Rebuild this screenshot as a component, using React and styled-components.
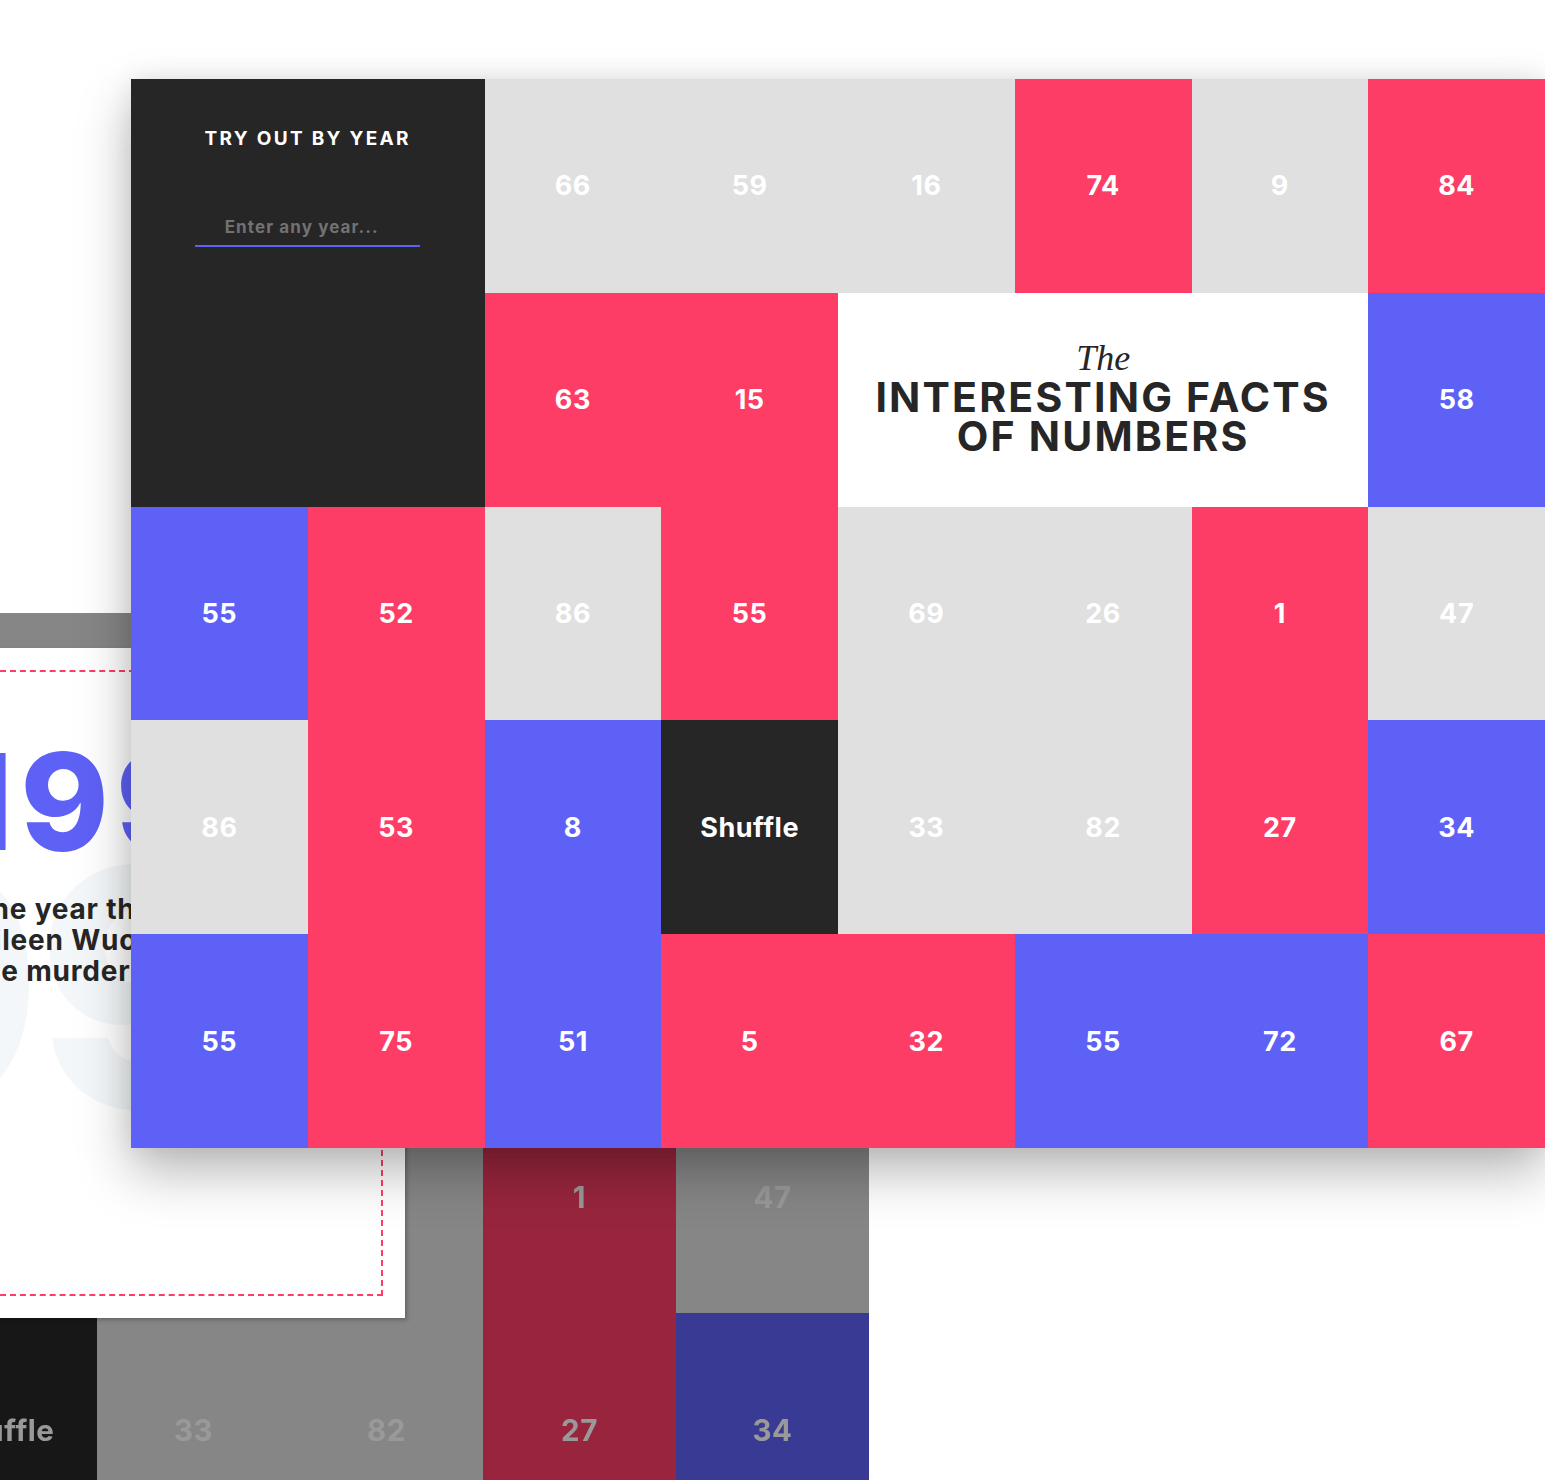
import React from "react";
import styled, { createGlobalStyle } from "styled-components";

const GlobalStyle = createGlobalStyle`
  html, body {
    margin: 0;
    padding: 0;
    background: #ffffff;
  }
  body {
    font-family: "Inter", "Liberation Sans", sans-serif;
  }
`;

const COLORS = {
  red: "#fd3d65",
  blue: "#5e61f6",
  gray: "#e0e0e0",
  dark: "#262626",
};

// [label, tone] per grid slot; the big panel and title take their own slots
const CELLS = [
  ["66", "gray"], ["59", "gray"], ["16", "gray"], ["74", "red"], ["9", "gray"], ["84", "red"],
  ["63", "red"], ["15", "red"], ["58", "blue"],
  ["55", "blue"], ["52", "red"], ["86", "gray"], ["55", "red"], ["69", "gray"], ["26", "gray"], ["1", "red"], ["47", "gray"],
  ["86", "gray"], ["53", "red"], ["8", "blue"], ["Shuffle", "dark"], ["33", "gray"], ["82", "gray"], ["27", "red"], ["34", "blue"],
  ["55", "blue"], ["75", "red"], ["51", "blue"], ["5", "red"], ["32", "red"], ["55", "blue"], ["72", "blue"], ["67", "red"],
];

const Board = ({ scale = 1 }) => {
  const cells = CELLS.map(([label, tone], i) => (
    <Cell key={i} tone={tone}>
      {label}
    </Cell>
  ));
  return (
    <Grid colW={176.75 * scale} rowH={213.8 * scale} size={27 * scale}>
      <YearPanel>
        <PanelTitle>TRY OUT BY YEAR</PanelTitle>
        <YearInput placeholder="Enter any year..." />
      </YearPanel>
      {cells.slice(0, 6)}
      {cells.slice(6, 8)}
      <TitleCell>
        <Script>The</Script>
        <Heading>
          INTERESTING FACTS
          <br />
          OF NUMBERS
        </Heading>
      </TitleCell>
      {cells.slice(8)}
    </Grid>
  );
};

const App = () => {
  return (
    <>
      <GlobalStyle />
      <Page>
        <Backdrop>
          <Board scale={1.092} />
        </Backdrop>
        <FactCard>
          <Dashed>
            <Watermark>992</Watermark>
            <Year>1992</Year>
            <Fact>
              The year that
              <br />
              Aileen Wuornos
              <br />
              the murders of
            </Fact>
          </Dashed>
        </FactCard>
        <Front>
          <Board />
        </Front>
      </Page>
    </>
  );
};

const Page = styled.div`
  position: relative;
  width: 1545px;
  height: 1480px;
  overflow: hidden;
  padding: 79px 0 0 131px;
  box-sizing: border-box;
`;

const Backdrop = styled.div`
  position: absolute;
  left: -675px;
  top: 613px;
  filter: brightness(0.6);
  z-index: 0;
`;

const FactCard = styled.div`
  position: absolute;
  left: -260px;
  top: 648px;
  width: 665px;
  height: 670px;
  background: #ffffff;
  box-shadow: 2px 2px 4px rgba(0, 0, 0, 0.25);
  padding: 22px;
  box-sizing: border-box;
  z-index: 1;
`;

const Dashed = styled.div`
  position: relative;
  height: 100%;
  border: 2px dashed ${COLORS.red};
  box-sizing: border-box;
  overflow: hidden;
  padding: 62px 0 0 196px;
`;

const Watermark = styled.div`
  position: absolute;
  left: 60px;
  top: 150px;
  font-size: 330px;
  font-weight: 800;
  line-height: 1;
  color: #f4f7f9;
  letter-spacing: -6px;
  z-index: 0;
`;

const Year = styled.div`
  position: relative;
  font-size: 134px;
  font-weight: 800;
  line-height: 1;
  color: ${COLORS.blue};
  letter-spacing: 7px;
  margin-left: -6px;
`;

const Fact = styled.div`
  position: relative;
  margin-top: 26px;
  margin-left: 12px;
  font-size: 28px;
  font-weight: 700;
  line-height: 31px;
  letter-spacing: 0.8px;
  color: #262626;
`;

const Front = styled.div`
  position: relative;
  z-index: 2;
  width: 1414px;
  box-shadow: 0 24px 50px rgba(0, 0, 0, 0.28), 0 0 24px rgba(0, 0, 0, 0.08);
`;

const Grid = styled.div`
  display: grid;
  grid-template-columns: repeat(8, ${(p) => p.colW}px);
  grid-template-rows: repeat(5, ${(p) => p.rowH}px);
  font-size: ${(p) => p.size}px;
`;

const Cell = styled.div`
  display: flex;
  align-items: center;
  justify-content: center;
  background: ${(p) => COLORS[p.tone]};
  color: #ffffff;
  font-size: 1em;
  font-weight: 700;
  letter-spacing: 0.02em;
`;

const YearPanel = styled.div`
  grid-column: 1 / span 2;
  grid-row: 1 / span 2;
  background: ${COLORS.dark};
  display: flex;
  flex-direction: column;
  align-items: center;
  padding-top: 48px;
`;

const PanelTitle = styled.div`
  color: #ffffff;
  font-size: 19px;
  line-height: 24px;
  font-weight: 700;
  letter-spacing: 2.3px;
`;

const YearInput = styled.input`
  margin-top: 58px;
  width: 225px;
  height: 38px;
  box-sizing: border-box;
  background: transparent;
  border: none;
  border-bottom: 2px solid ${COLORS.blue};
  outline: none;
  font-family: "Inter", "Liberation Sans", sans-serif;
  font-size: 17px;
  font-weight: 700;
  letter-spacing: 1.1px;
  color: #ffffff;
  text-align: center;
  padding: 0 12px 0 0;
  &::placeholder {
    color: #727272;
  }
`;

const TitleCell = styled.div`
  grid-column: 5 / span 3;
  grid-row: 2;
  background: #ffffff;
  display: flex;
  flex-direction: column;
  align-items: center;
  justify-content: center;
  padding-bottom: 4px;
`;

const Script = styled.div`
  font-family: "Liberation Serif", serif;
  font-style: italic;
  font-size: 36px;
  line-height: 36px;
  color: #262626;
  margin-bottom: 2px;
`;

const Heading = styled.h1`
  margin: 0;
  text-align: center;
  font-size: 41px;
  line-height: 39px;
  font-weight: 700;
  letter-spacing: 2.2px;
  color: #262626;
`;

export default App;
